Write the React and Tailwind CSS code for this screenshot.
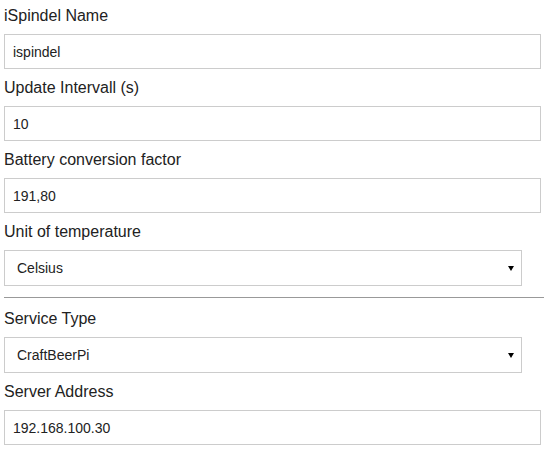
const FIELDS_TOP = [
  { label: "iSpindel Name", value: "ispindel" },
  { label: "Update Intervall (s)", value: "10" },
  { label: "Battery conversion factor", value: "191,80" },
];

function Label({ children }) {
  return (
    <label className="block text-base leading-[18px] mb-[9px] text-[#222]">
      {children}
    </label>
  );
}

function TextField({ label, value }) {
  return (
    <div>
      <Label>{label}</Label>
      <input
        type="text"
        defaultValue={value}
        className="block w-[537px] h-[35px] border border-[#ccc] bg-white px-2 text-sm text-[#222] outline-none"
      />
    </div>
  );
}

function SelectField({ label, value }) {
  return (
    <div>
      <Label>{label}</Label>
      <div className="flex items-center justify-between w-[518px] h-[36px] border border-[#ccc] bg-white pl-[12px] pr-[6px] text-sm text-[#222]">
        <span>{value}</span>
        <svg width="6" height="5" viewBox="0 0 6 5" className="mr-[1px]">
          <path d="M0 0h6L3 5z" fill="#000" />
        </svg>
      </div>
    </div>
  );
}

export default function App() {
  return (
    <div
      className="w-[544px] h-[449px] bg-white overflow-hidden pl-1 pt-[7px] flex flex-col gap-[10px]"
      style={{ fontFamily: '"Liberation Sans", Arial, sans-serif' }}
    >
      {FIELDS_TOP.map((f) => (
        <TextField key={f.label} label={f.label} value={f.value} />
      ))}
      <SelectField label="Unit of temperature" value="Celsius" />
      <hr className="border-0 border-t border-[#999] mt-[1px] mb-[2px]" />
      <SelectField label="Service Type" value="CraftBeerPi" />
      <TextField label="Server Address" value="192.168.100.30" />
    </div>
  );
}
